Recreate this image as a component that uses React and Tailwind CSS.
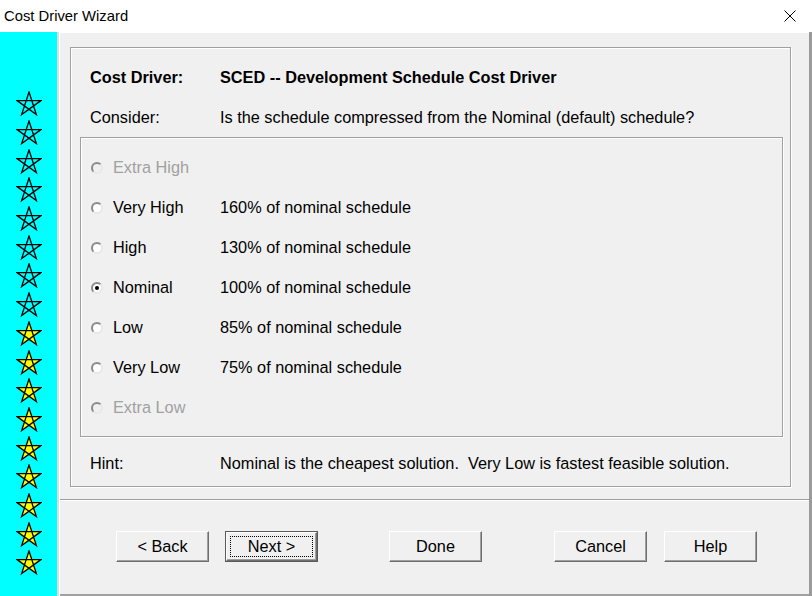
import React from 'react';

const options = [
  { label: 'Extra High', desc: '', disabled: true },
  { label: 'Very High', desc: '160% of nominal schedule' },
  { label: 'High', desc: '130% of nominal schedule' },
  { label: 'Nominal', desc: '100% of nominal schedule', checked: true },
  { label: 'Low', desc: '85% of nominal schedule' },
  { label: 'Very Low', desc: '75% of nominal schedule' },
  { label: 'Extra Low', desc: '', disabled: true },
];

const stars = Array.from({ length: 17 }, (_, i) => i >= 8);

function Star({ filled }) {
  return (
    <svg width="26" height="26" viewBox="0 0 26 26">
      <path
        d="M13 1 L20.35 23.61 L1.11 9.64 L24.89 9.64 L5.65 23.61 Z"
        fill={filled ? '#ffff00' : 'none'}
        stroke="#000"
        strokeWidth="1.3"
        strokeLinejoin="miter"
      />
    </svg>
  );
}

function Radio({ checked, disabled }) {
  return (
    <div
      className={`w-3 h-3 rounded-full border-2 border-t-[#8a8a8a] border-l-[#8a8a8a] border-r-[#e8e8e8] border-b-[#e8e8e8] flex items-center justify-center ${
        disabled ? 'bg-[#f0f0f0]' : 'bg-white'
      }`}
    >
      {checked && <div className="w-1 h-1 rounded-full bg-black"></div>}
    </div>
  );
}

function Button({ children, isDefault }) {
  if (isDefault) {
    return (
      <div className="w-[93px] h-[31px] border border-[#5a5a5a]">
        <div className="w-full h-full border border-t-white border-l-white border-r-[#6e6e6e] border-b-[#6e6e6e] shadow-[inset_-1px_-1px_0_#a0a0a0] p-[3px]">
          <div className="w-full h-full border border-dotted border-black flex items-center justify-center text-[16.3px] text-black">
            {children}
          </div>
        </div>
      </div>
    );
  }
  return (
    <div className="w-[93px] h-[31px] border border-t-white border-l-white border-r-[#6e6e6e] border-b-[#6e6e6e] shadow-[inset_-1px_-1px_0_#a0a0a0] flex items-center justify-center text-[16.3px] text-black">
      {children}
    </div>
  );
}

export default function App() {
  return (
    <div className="w-[812px] h-[596px] bg-white flex flex-col font-['Liberation_Sans',Arial,sans-serif] overflow-hidden">
      {/* title bar */}
      <div className="h-8 flex items-center justify-between pl-[4px] pr-[16px]">
        <span className="text-[14.8px] text-black">Cost Driver Wizard</span>
        <svg width="12" height="12" viewBox="0 0 12 12">
          <path d="M0.5 0.5 L11.5 11.5 M11.5 0.5 L0.5 11.5" stroke="#000" strokeWidth="1" />
        </svg>
      </div>

      <div className="flex flex-1">
        {/* star column */}
        <div className="w-[57px] bg-[#00ffff] flex flex-col items-center pt-[58px]">
          {stars.map((filled, i) => (
            <div key={i} className="h-[28.7px] flex items-center justify-center">
              <Star filled={filled} />
            </div>
          ))}
        </div>

        <div className="flex-1 flex border-l-2 border-[#dcdcdc]">
          <div className="flex-1 flex flex-col bg-[#f0f0f0] border-l border-white border-r-[3px] border-r-[#9a9a9a]">
            {/* upper panel */}
            <div className="h-[468px] border-t border-t-white border-b border-b-[#a0a0a0] pl-[10px] pt-[14px]">
              <div className="w-[721px] h-[440px] border border-[#a0a0a0] shadow-[inset_1px_1px_0_#fff,1px_1px_0_#fff] pt-[9px] flex flex-col text-[16.3px] text-black">
                <div className="h-10 pt-[1px] flex items-center pl-[19px] font-bold">
                  <span className="w-[130px]">Cost Driver:</span>
                  <span>SCED -- Development Schedule Cost Driver</span>
                </div>
                <div className="h-10 pt-[1px] flex items-center pl-[19px]">
                  <span className="w-[130px]">Consider:</span>
                  <span>Is the schedule compressed from the Nominal (default) schedule?</span>
                </div>

                {/* options group */}
                <div className="ml-[9px] w-[703px] h-[300px] border border-[#a0a0a0] shadow-[inset_1px_1px_0_#fff,1px_1px_0_#fff] pt-[9px] pl-[10px]">
                  {options.map((o) => (
                    <div key={o.label} className="h-10 pt-[1px] flex items-center">
                      <Radio checked={o.checked} disabled={o.disabled} />
                      <span className={`ml-[10px] w-[107px] ${o.disabled ? 'text-[#a0a0a0]' : ''}`}>{o.label}</span>
                      <span>{o.desc}</span>
                    </div>
                  ))}
                </div>

                <div className="h-10 mt-[6px] pt-[1px] flex items-center pl-[19px]">
                  <span className="w-[130px]">Hint:</span>
                  <span>Nominal is the cheapest solution.&nbsp; Very Low is fastest feasible solution.</span>
                </div>
              </div>
            </div>

            {/* button panel */}
            <div className="flex-1 border-t border-white border-b-2 border-b-[#a0a0a0] pt-[30px] pl-[56px] flex items-start">
              <Button>&lt; Back</Button>
              <div className="ml-[16px]">
                <Button isDefault>Next &gt;</Button>
              </div>
              <div className="ml-[71px]">
                <Button>Done</Button>
              </div>
              <div className="ml-[72px]">
                <Button>Cancel</Button>
              </div>
              <div className="ml-[17px]">
                <Button>Help</Button>
              </div>
            </div>
          </div>
        </div>
      </div>
    </div>
  );
}
